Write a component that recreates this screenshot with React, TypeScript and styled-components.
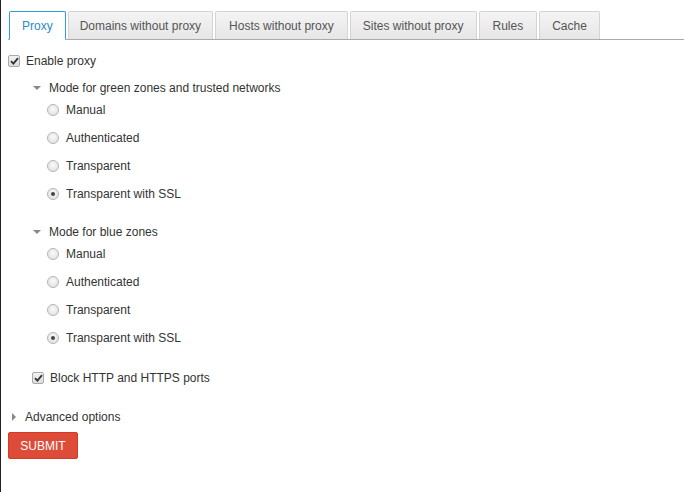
import React, { useState } from 'react';
import styled, { createGlobalStyle } from 'styled-components';

const GlobalStyle = createGlobalStyle`
	html, body {
		margin: 0;
		padding: 0;
		background: #fff;
	}
	body {
		font-family: 'Liberation Sans', Arial, sans-serif;
		font-size: 12px;
		color: #333;
	}
`;

const Page = styled.div`
	min-height: 492px;
	box-sizing: border-box;
	border-left: 1px solid #222;
	padding: 11px 0 0 7px;
`;

const TabBar = styled.div`
	display: flex;
	align-items: flex-end;
	gap: 2px;
	height: 28px;
	margin-right: 1px;
	padding-left: 1px;
	border-bottom: 1px solid #aaa;
`;

const Tab = styled.div<{ $active?: boolean; $pad?: number }>`
	box-sizing: border-box;
	height: ${(p) => (p.$active ? '29px' : '28px')};
	margin-bottom: ${(p) => (p.$active ? '-1px' : '0')};
	padding: 0 ${(p) => p.$pad ?? 12}px;
	display: flex;
	align-items: center;
	border: 1px solid ${(p) => (p.$active ? '#2c9fd8' : '#d4d4d4')};
	border-bottom: ${(p) => (p.$active ? '1px solid #fff' : 'none')};
	border-radius: 2px 2px 0 0;
	background: ${(p) =>
		p.$active ? '#fff' : 'linear-gradient(#f4f4f4, #e6e6e6)'};
	color: ${(p) => (p.$active ? '#2a8cc4' : '#555')};
	font-size: 12px;
	cursor: pointer;
`;

const Body = styled.div`
	padding-top: 14px;
`;

const CheckRow = styled.label<{ $indent?: number }>`
	display: flex;
	align-items: center;
	height: 14px;
	margin-left: ${(p) => p.$indent ?? 0}px;
	gap: 6px;
`;

const Box = styled.span`
	box-sizing: border-box;
	width: 12px;
	height: 12px;
	border: 1px solid #a9a9a9;
	border-radius: 2px;
	background: linear-gradient(#f2f2f2, #dcdcdc);
	display: flex;
	align-items: center;
	justify-content: center;
`;

const Section = styled.div<{ $gap?: number }>`
	display: flex;
	flex-direction: column;
	gap: ${(p) => p.$gap ?? 23}px;
	margin: 12px 0 0 18px;
`;

const SectionHead = styled.div<{ $indent?: number }>`
	display: flex;
	align-items: center;
	height: 16px;
	gap: ${(p) => p.$indent ?? 8}px;
`;

const Caret = styled.span<{ $open?: boolean }>`
	width: 0;
	height: 0;
	${(p) =>
		p.$open
			? `border-left: 4px solid transparent;
		border-right: 4px solid transparent;
		border-top: 4px solid #888;
		margin-left: 7px;`
			: `border-top: 4px solid transparent;
		border-bottom: 4px solid transparent;
		border-left: 4px solid #888;
		margin-left: 4px;`}
`;

const RadioList = styled.div`
	display: flex;
	flex-direction: column;
	gap: 14px;
	margin: 7px 0 0 21px;
`;

const RadioRow = styled.label`
	display: flex;
	align-items: center;
	height: 14px;
	gap: 7px;
	cursor: pointer;
`;

const Dot = styled.span<{ $on?: boolean }>`
	box-sizing: border-box;
	width: 12px;
	height: 12px;
	border-radius: 50%;
	border: 1px solid #b4b4b4;
	background: radial-gradient(circle at 50% 40%, #fafafa, #dcdcdc);
	display: flex;
	align-items: center;
	justify-content: center;
	&::after {
		content: '';
		display: ${(p) => (p.$on ? 'block' : 'none')};
		width: 4px;
		height: 4px;
		border-radius: 50%;
		background: #444;
	}
`;

const Footer = styled.div`
	display: flex;
	flex-direction: column;
	align-items: flex-start;
	margin-top: 26px;
`;

const SubmitButton = styled.button`
	margin-top: 7px;
	width: 70px;
	height: 27px;
	border: 1px solid #d73925;
	border-radius: 2px;
	background: #dd4b39;
	color: #fff;
	font-family: 'Liberation Sans', Arial, sans-serif;
	font-size: 12px;
	cursor: pointer;
	padding: 0;
`;

const tabs = [
	{ label: 'Proxy', pad: 12 },
	{ label: 'Domains without proxy', pad: 11 },
	{ label: 'Hosts without proxy', pad: 13 },
	{ label: 'Sites without proxy', pad: 12 },
	{ label: 'Rules', pad: 13 },
	{ label: 'Cache', pad: 12 },
];

const modes = ['Manual', 'Authenticated', 'Transparent', 'Transparent with SSL'];

const Tick = () => (
	<svg width='9' height='8' viewBox='0 0 9 8'>
		<path d='M1 4.2 L3.4 6.6 L8 1.2' fill='none' stroke='#333' strokeWidth='1.8' />
	</svg>
);

const ModeGroup: React.FC<{ title: string }> = ({ title }) => {
	const [value, setValue] = useState('Transparent with SSL');
	return (
		<div>
			<SectionHead>
				<Caret $open />
				<span>{title}</span>
			</SectionHead>
			<RadioList>
				{modes.map((m) => (
					<RadioRow key={m} onClick={() => setValue(m)}>
						<Dot $on={value === m} />
						{m}
					</RadioRow>
				))}
			</RadioList>
		</div>
	);
};

const App: React.FC = () => {
	const [active, setActive] = useState(0);
	return (
		<>
			<GlobalStyle />
			<Page>
				<TabBar>
					{tabs.map((t, i) => (
						<Tab key={t.label} $active={i === active} $pad={t.pad} onClick={() => setActive(i)}>
							{t.label}
						</Tab>
					))}
				</TabBar>
				<Body>
					<CheckRow>
						<Box>
							<Tick />
						</Box>
						Enable proxy
					</CheckRow>
					<Section>
						<ModeGroup title='Mode for green zones and trusted networks' />
						<ModeGroup title='Mode for blue zones' />
					</Section>
					<Footer>
						<CheckRow $indent={24}>
							<Box>
								<Tick />
							</Box>
							Block HTTP and HTTPS ports
						</CheckRow>
						<div style={{ height: 24 }} />
						<SectionHead $indent={9}>
							<Caret />
							<span>Advanced options</span>
						</SectionHead>
						<SubmitButton>SUBMIT</SubmitButton>
					</Footer>
				</Body>
			</Page>
		</>
	);
};

export default App;
